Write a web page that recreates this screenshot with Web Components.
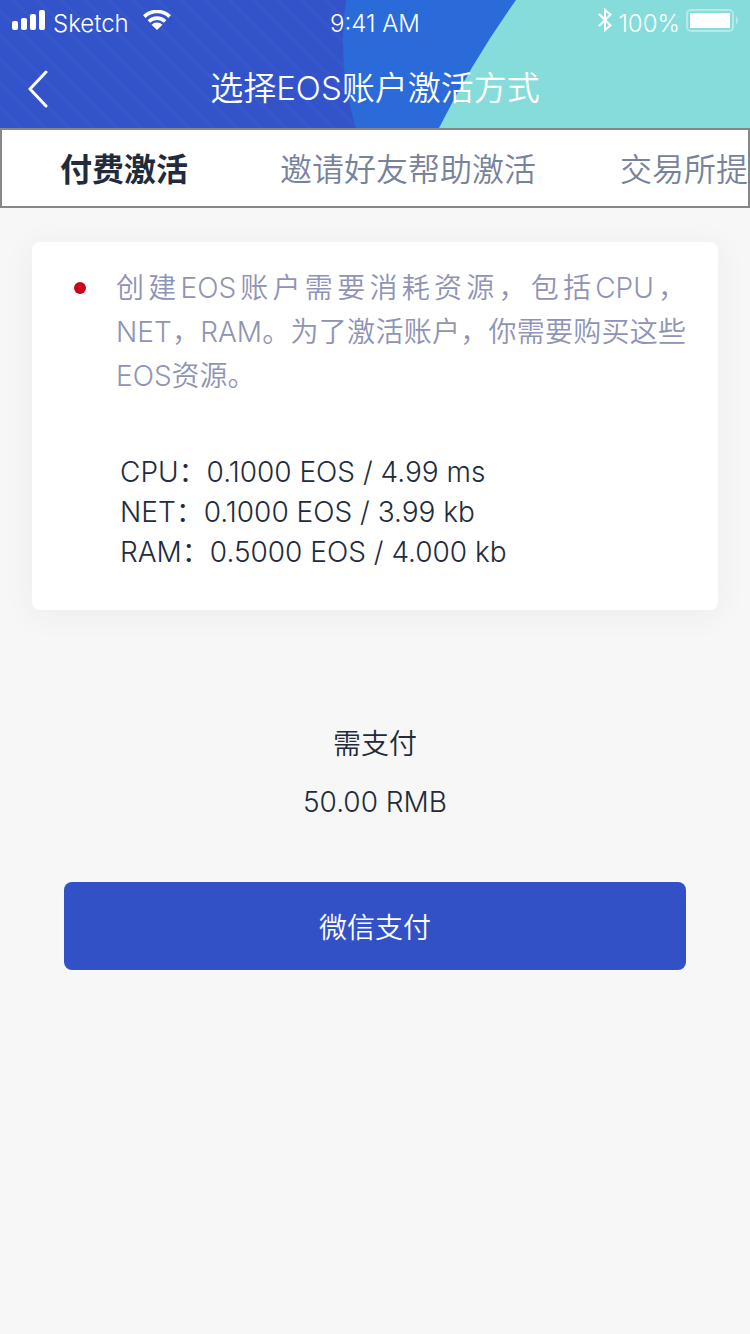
<!DOCTYPE html>
<html lang="zh-CN">
<head>
<meta charset="utf-8">
<meta name="viewport" content="width=device-width, initial-scale=1">
<title>选择EOS账户激活方式</title>
<style>
  body { margin: 0; background: #f7f7f7; color: #212b3b; font-family: Inter, "Noto Sans CJK SC", sans-serif; font-size: 28px; font-weight: 350; }
</style>
</head>
<body>
<activation-page></activation-page>
<script>
const define = (name, html) => {
  const template = document.createElement('template');
  template.innerHTML = html;
  customElements.define(name, class extends HTMLElement {
    constructor() {
      super();
      this.attachShadow({ mode: 'open' }).append(template.content.cloneNode(true));
    }
  });
};

define('status-bar', `
  <style>
    :host { display: grid; grid-template-columns: 1fr auto 1fr; align-items: center; height: 40px; padding: 8px 12px 0; box-sizing: border-box; font-size: 24px; line-height: 32px; }
    div { display: flex; align-items: center; gap: 8px; }
    .right { justify-content: flex-end; gap: 6px; }
    svg { display: block; flex: none; margin-bottom: 8px; }
  </style>
  <div>
    <svg width="33" height="20" fill="#fff" aria-hidden="true"><rect y="11" width="6" height="9" rx="2"/><rect x="9" y="8" width="6" height="12" rx="2"/><rect x="18" y="4" width="6" height="16" rx="2"/><rect x="27" width="6" height="20" rx="2"/></svg>
    <span>Sketch</span>
    <svg width="36" height="20" viewBox="-6 0 36 20" aria-hidden="true"><g fill="none" stroke="#fff" stroke-width="3.6"><path d="M1.3 6.6a18.3 18.3 0 0 1 25.4 0"/><path d="M5.9 11.5a11.5 11.5 0 0 1 16.2 0"/></g><path d="M14 20l-5.5-5.2a7.8 7.8 0 0 1 11 0z" fill="#fff"/></svg>
  </div>
  <time>9:41 AM</time>
  <div class="right">
    <svg width="14" height="24" fill="none" stroke="#fff" stroke-width="2" aria-hidden="true"><path d="M1 6l11.500 11.500L7 22V2l5.500 4.500L1 18"/></svg>
    <span>100%</span>
    <svg width="52" height="23" aria-hidden="true"><rect x="1" y="1" width="46" height="21" rx="4" fill="none" stroke="#fff" stroke-opacity=".4" stroke-width="2"/><rect x="4" y="4" width="40" height="15" fill="#fff"/><path d="M50 7.500c3 1.500 3 6.500 0 8z" fill="#fff" fill-opacity=".4"/></svg>
  </div>`);

define('nav-header', `
  <style>
    :host { display: block; position: relative; color: #fff; background: repeating-linear-gradient(45deg, #3253c9 0 13px, #3758cb 14px 16px, #3253c9 17px); overflow: hidden; }
    .art { position: absolute; left: 0; top: 0; width: 100%; height: 100%; }
    status-bar, nav { position: relative; }
    nav { display: grid; grid-template-columns: 72px 1fr 72px; align-items: center; height: 88px; padding-top: 8px; box-sizing: border-box; }
    button { display: grid; place-items: center; width: 76px; height: 80px; margin: 0; padding: 2px 0 0; border: 0; background: none; color: inherit; }
    h1 { margin: 0; font-size: 33px; line-height: 48px; font-weight: inherit; text-align: center; }
  </style>
  <svg class="art" viewBox="0 0 750 128" preserveAspectRatio="none" aria-hidden="true">
    <path d="M346 0A287 287 0 0 0 356 128H750V0z" fill="#2a6ad9"/>
    <path d="M516 0Q472 62 439 128H750V0z" fill="#85dcda"/>
  </svg>
  <status-bar></status-bar>
  <nav>
    <button type="button" aria-label="返回"><svg width="20" height="38" fill="none" stroke="#fff" stroke-width="3" stroke-linecap="round" stroke-linejoin="round"><path d="M18 2L2 19l16 17"/></svg></button>
    <h1><slot></slot></h1>
  </nav>`);

define('tab-strip', `
  <style>
    :host { display: grid; grid-template-columns: 220px 340px auto; justify-content: start; align-items: center; height: 80px; padding: 4px 0 0 58px; box-sizing: border-box; overflow: hidden; background: #fff; border: 2px solid #878787; }
  </style>
  <slot></slot>`);

define('tab-item', `
  <style>
    :host { display: block; color: #78829b; }
    :host([active]) { color: #212b3b; }
    button { display: block; padding: 0; border: 0; background: none; color: inherit; font: inherit; font-size: 32px; line-height: 48px; white-space: nowrap; }
    :host([active]) button { font-weight: 700; }
  </style>
  <button type="button"><slot></slot></button>`);

define('info-card', `
  <style>
    :host { display: block; padding: 24px 32px 38px 42px; background: #fff; border-radius: 8px; box-shadow: 0 4px 32px rgba(33, 43, 80, .06); }
    .note { display: grid; grid-template-columns: 12px 1fr; gap: 30px; color: #8f93b5; line-height: 44px; }
    .dot { width: 12px; height: 12px; margin-top: 16px; border-radius: 50%; background: #c9051c; }
    p { margin: 0; text-align: justify; text-justify: inter-character; }
    .specs { margin: 54px 0 0 46px; line-height: 40px; }
  </style>
  <div class="note"><span class="dot"></span><p><slot></slot></p></div>
  <div class="specs"><slot name="specs"></slot></div>`);

define('pay-summary', `
  <style>
    :host { display: grid; gap: 18px; text-align: center; line-height: 40px; }
  </style>
  <slot></slot>`);

define('pay-button', `
  <style>
    :host { display: block; }
    button { display: block; width: 100%; height: 88px; padding: 0; border: 0; border-radius: 8px; background: #3251c6; color: #fff; font: inherit; }
  </style>
  <button type="button"><slot></slot></button>`);

define('activation-page', `
  <style>
    :host { display: block; }
    main { padding: 34px 32px; }
    pay-summary { margin-top: 114px; }
    pay-button { margin: 60px 32px 0; }
  </style>
  <header>
    <nav-header>选择EOS账户激活方式</nav-header>
    <tab-strip><tab-item active>付费激活</tab-item><tab-item>邀请好友帮助激活</tab-item><tab-item>交易所提</tab-item></tab-strip>
  </header>
  <main>
    <info-card>创建EOS账户需要消耗资源，包括CPU，NET，RAM。为了激活账户，你需要购买这些EOS资源。
      <div slot="specs">CPU：0.1000 EOS / 4.99 ms</div>
      <div slot="specs">NET：0.1000 EOS / 3.99 kb</div>
      <div slot="specs">RAM：0.5000 EOS / 4.000 kb</div>
    </info-card>
    <pay-summary><span>需支付</span><span>50.00 RMB</span></pay-summary>
    <pay-button>微信支付</pay-button>
  </main>`);
</script>
</body>
</html>
